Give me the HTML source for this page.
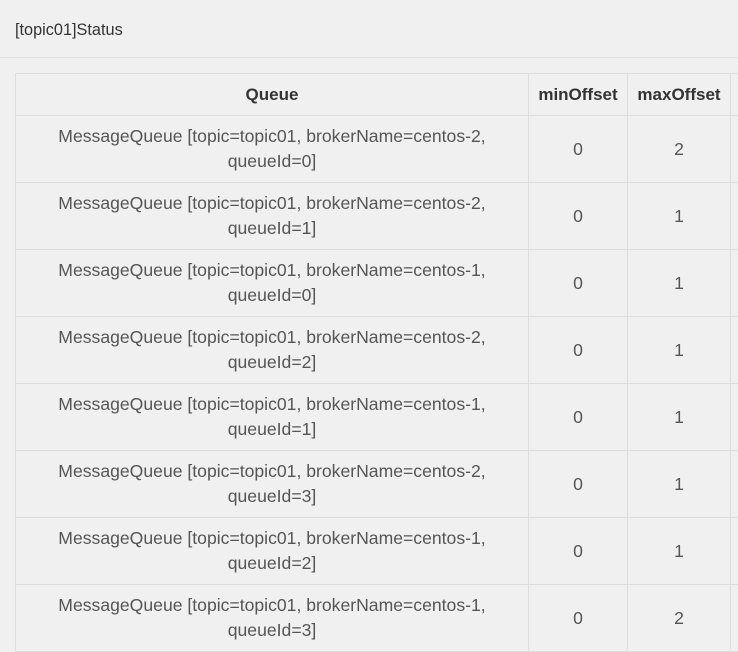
<!DOCTYPE html>
<html><head><style>
body{margin:0;background:#f0f0f0;font-family:"Liberation Sans",Arial,sans-serif;color:#333;width:738px;height:651px;overflow:hidden;position:relative}
.t{position:absolute;left:15px;top:21px;font-size:16.3px;color:#333}
.hr{position:absolute;left:0;right:0;top:57px;border-top:1px solid #e0e0e0}
table{position:absolute;left:15px;top:73px;border-collapse:collapse;font-size:17.6px;table-layout:fixed;width:760px}
td,th{border:1px solid #ddd;text-align:center;vertical-align:middle;padding:0 2px;line-height:25px;white-space:nowrap}
th{height:41px;font-weight:bold;font-size:17px}
td{height:66px;color:#555}
</style></head><body>
<div class="t">[topic01]Status</div>
<div class="hr"></div>
<table>
<colgroup><col style="width:513px"><col style="width:99px"><col style="width:103px"><col style="width:45px"></colgroup>
<tr><th>Queue</th><th>minOffset</th><th>maxOffset</th><th></th></tr>
<tr><td>MessageQueue [topic=topic01, brokerName=centos-2,<br>queueId=0]</td><td>0</td><td>2</td><td></td></tr>
<tr><td>MessageQueue [topic=topic01, brokerName=centos-2,<br>queueId=1]</td><td>0</td><td>1</td><td></td></tr>
<tr><td>MessageQueue [topic=topic01, brokerName=centos-1,<br>queueId=0]</td><td>0</td><td>1</td><td></td></tr>
<tr><td>MessageQueue [topic=topic01, brokerName=centos-2,<br>queueId=2]</td><td>0</td><td>1</td><td></td></tr>
<tr><td>MessageQueue [topic=topic01, brokerName=centos-1,<br>queueId=1]</td><td>0</td><td>1</td><td></td></tr>
<tr><td>MessageQueue [topic=topic01, brokerName=centos-2,<br>queueId=3]</td><td>0</td><td>1</td><td></td></tr>
<tr><td>MessageQueue [topic=topic01, brokerName=centos-1,<br>queueId=2]</td><td>0</td><td>1</td><td></td></tr>
<tr><td>MessageQueue [topic=topic01, brokerName=centos-1,<br>queueId=3]</td><td>0</td><td>2</td><td></td></tr>
</table>
</body></html>
